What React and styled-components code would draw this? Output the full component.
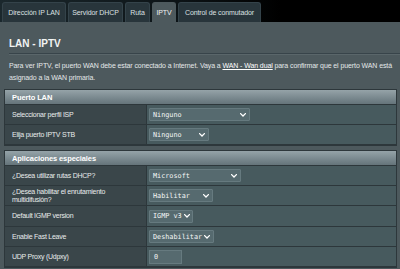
import React from "react";
import styled, { createGlobalStyle } from "styled-components";

const GlobalStyle = createGlobalStyle`
    html, body {
        margin: 0;
        padding: 0;
        background: #000;
    }
`;

const SANS = `"Liberation Sans", Arial, sans-serif`;
const MONO = `"DejaVu Sans Mono", "Liberation Mono", monospace`;

const tabs = [
    { label: "Dirección IP LAN", width: 64 },
    { label: "Servidor DHCP", width: 55 },
    { label: "Ruta", width: 25 },
    { label: "IPTV", width: 24, active: true },
    { label: "Control de conmutador", width: 83 },
];

const Chevron = () => (
    <svg width="6" height="4" viewBox="0 0 6 4" fill="none" xmlns="http://www.w3.org/2000/svg">
        <path d="M0.6 0.6L3 3L5.4 0.6" stroke="#ffffff" strokeWidth="1.3" strokeLinecap="round" />
    </svg>
);

const Dropdown = ({ value, width }) => (
    <Select $w={width}>
        <span>{value}</span>
        <Chevron />
    </Select>
);

const App = () => {
    return (
        <Page>
            <GlobalStyle />
            <TabBar>
                {tabs.map((tab) => (
                    <Tab key={tab.label} $w={tab.width} $active={tab.active}>
                        {tab.label}
                    </Tab>
                ))}
            </TabBar>
            <Panel>
                <Title>LAN - IPTV</Title>
                <Divider />
                <Description>
                    <Line>
                        <span>Para ver IPTV, el puerto WAN debe estar conectado a Internet. Vaya a </span>
                        <u>WAN - Wan dual</u>
                        <span> para confirmar que el puerto WAN está</span>
                    </Line>
                    <Line>asignado a la WAN primaria.</Line>
                </Description>

                <FormTable>
                    <HeaderRow>Puerto LAN</HeaderRow>
                    <Row>
                        <Label>Seleccionar perfil ISP</Label>
                        <Value>
                            <Dropdown value="Ninguno" width={101} />
                        </Value>
                    </Row>
                    <Row>
                        <Label>Elija puerto IPTV STB</Label>
                        <Value>
                            <Dropdown value="Ninguno" width={60} />
                        </Value>
                    </Row>
                </FormTable>

                <FormTable>
                    <HeaderRow>Aplicaciones especiales</HeaderRow>
                    <Row>
                        <Label>¿Desea utilizar rutas DHCP?</Label>
                        <Value>
                            <Dropdown value="Microsoft" width={92} />
                        </Value>
                    </Row>
                    <Row>
                        <Label $wrap>¿Desea habilitar el enrutamiento multidifusión?</Label>
                        <Value>
                            <Dropdown value="Habilitar" width={64} />
                        </Value>
                    </Row>
                    <Row $h={20}>
                        <Label>Default IGMP version</Label>
                        <Value>
                            <Dropdown value="IGMP v3" width={44} />
                        </Value>
                    </Row>
                    <Row>
                        <Label>Enable Fast Leave</Label>
                        <Value>
                            <Dropdown value="Deshabilitar" width={65} />
                        </Value>
                    </Row>
                    <Row>
                        <Label>UDP Proxy (Udpxy)</Label>
                        <Value>
                            <TextInput>0</TextInput>
                        </Value>
                    </Row>
                </FormTable>
            </Panel>
        </Page>
    );
};

const Page = styled.div`
    width: 400px;
    height: 269px;
    overflow: hidden;
    display: flex;
    flex-direction: column;
    background: linear-gradient(90deg, #1b282d 0%, #0c1316 45%, #000 70%);
    font-family: ${SANS};
`;

const TabBar = styled.div`
    display: flex;
    align-items: flex-end;
    gap: 2px;
    height: 22px;
    padding-left: 2px;
    flex-shrink: 0;
`;

const Tab = styled.div`
    width: ${(p) => p.$w}px;
    height: 20px;
    box-sizing: border-box;
    display: flex;
    align-items: center;
    justify-content: center;
    white-space: nowrap;
    border-radius: 3px 3px 0 0;
    font-size: 7px;
    letter-spacing: -0.1px;
    color: ${(p) => (p.$active ? "#eef1f1" : "#dbe0e2")};
    background: ${(p) => (p.$active ? "#4d595d" : "#28353b")};
    border: 1px solid ${(p) => (p.$active ? "#4d595d" : "#34434a")};
    border-bottom: 0;
`;

const Panel = styled.div`
    flex: 1;
    background: #4d595d;
    padding: 0 3px 0 4px;
`;

const Title = styled.div`
    padding: 15px 0 0 5px;
    height: 14px;
    font-size: 10px;
    font-weight: bold;
    color: #f2f4f4;
    line-height: 14px;
`;

const Divider = styled.div`
    margin: 2px -3px 0 5px;
    height: 1px;
    background: #38444a;
    border-bottom: 1px solid #5a666a;
`;

const Description = styled.div`
    padding: 5px 0 0 5px;
    height: 29px;
    font-size: 7px;
    letter-spacing: -0.1px;
    color: #e4e8e9;

    u {
        color: #ffffff;
    }
`;

const Line = styled.div`
    height: 12px;
    line-height: 12px;
    white-space: nowrap;
`;

const FormTable = styled.div`
    display: flex;
    flex-direction: column;
    gap: 1px;
    background: #2d373b;
    border: 1px solid #2d373b;
    border-bottom-width: 2px;
    margin-bottom: 4px;
`;

const HeaderRow = styled.div`
    height: 14px;
    display: flex;
    align-items: center;
    padding-left: 7px;
    font-size: 7.5px;
    letter-spacing: -0.1px;
    font-weight: bold;
    color: #ffffff;
    background: linear-gradient(180deg, #95a3a8 0%, #7a898f 55%, #65747a 100%);
`;

const Row = styled.div`
    display: grid;
    grid-template-columns: 141px 1fr;
    gap: 1px;
    height: ${(p) => p.$h || 19}px;
`;

const Label = styled.div`
    display: flex;
    align-items: center;
    padding: 0 6px 0 7px;
    font-size: 7px;
    letter-spacing: -0.25px;
    line-height: ${(p) => (p.$wrap ? "8px" : "10px")};
    color: #e8ecec;
    background: #3a464a;
`;

const Value = styled.div`
    display: flex;
    align-items: center;
    padding-left: 2px;
    background: #475a5e;
`;

const Select = styled.div`
    width: ${(p) => p.$w}px;
    height: 13px;
    box-sizing: border-box;
    display: flex;
    align-items: center;
    justify-content: space-between;
    gap: 2px;
    padding: 0 3px;
    white-space: nowrap;
    font-family: ${MONO};
    font-size: 6.8px;
    color: #f4f6f6;
    background: #566a6f;
    border: 1px solid #667a7f;
    border-radius: 1px;

    svg {
        flex-shrink: 0;
    }
`;

const TextInput = styled.div`
    width: 33px;
    height: 14px;
    box-sizing: border-box;
    display: flex;
    align-items: center;
    padding-left: 4px;
    font-family: ${MONO};
    font-size: 6.8px;
    color: #f4f6f6;
    background: #566a6f;
    border: 1px solid #667a7f;
`;

export default App;
